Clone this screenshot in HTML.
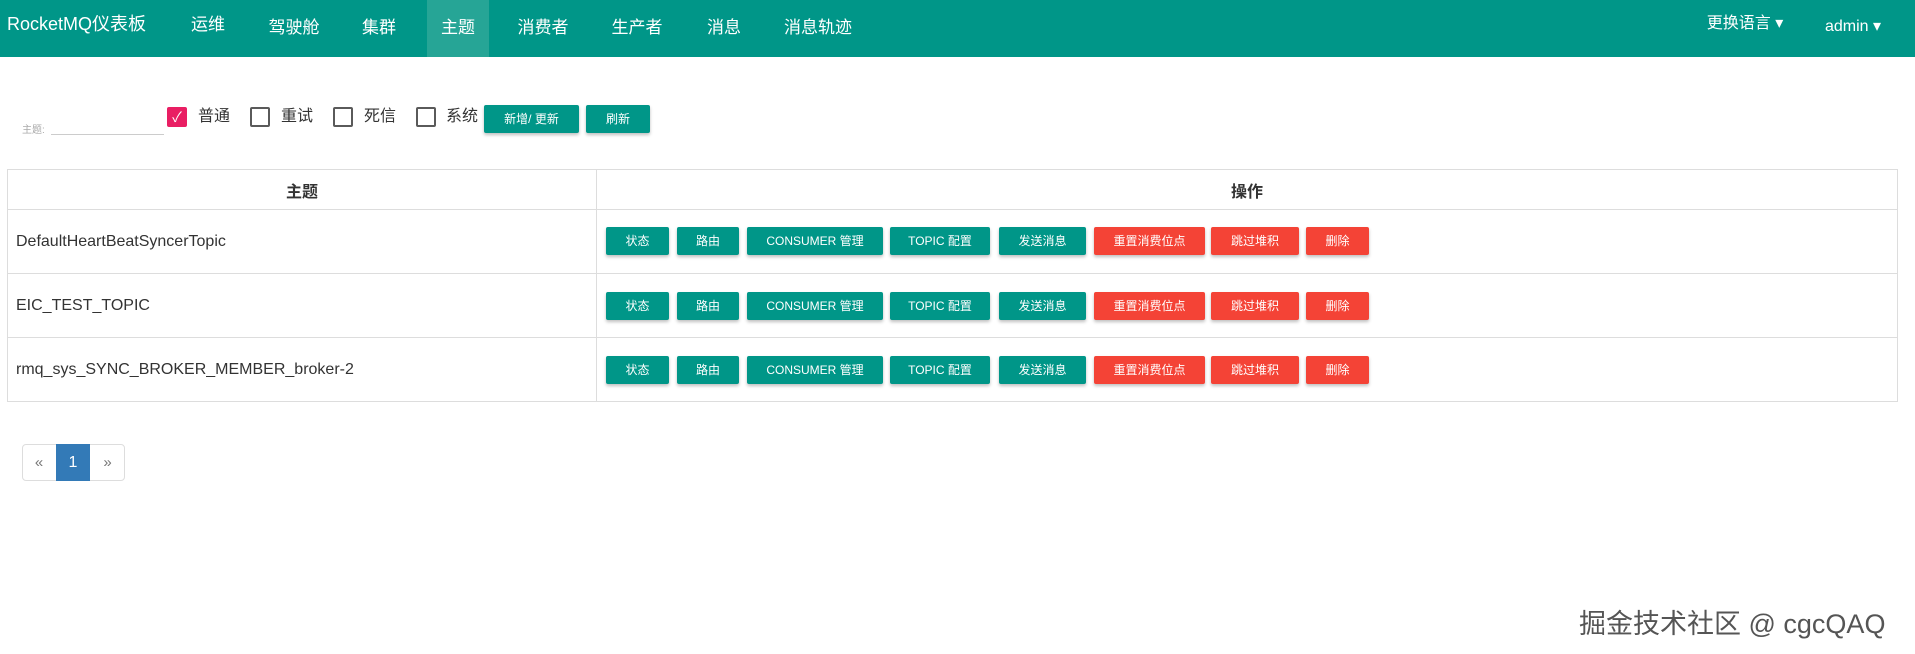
<!DOCTYPE html>
<html><head><meta charset="utf-8">
<style>
*{box-sizing:border-box;margin:0;padding:0}
body{width:1915px;height:654px;background:#fff;font-family:"Liberation Sans","Noto Sans CJK SC",sans-serif;position:relative;overflow:hidden;color:#333}
.nav{position:absolute;left:0;top:0;width:1915px;height:57px;background:#009688;color:#fff}
.nav span{position:absolute;top:0;line-height:52px;font-size:17px;transform:translateX(-50%)}
.act{position:absolute;left:427px;top:0;width:62px;height:57px;background:#26a596}
.abs{position:absolute}
.cb{position:absolute;top:107px;width:20px;height:20px;border:2px solid #5a5a5a;border-radius:2px}
.cbl{position:absolute;top:107px;font-size:16px;line-height:20px;color:#333}
.btn{position:absolute;height:28px;line-height:28px;text-align:center;color:#fff;font-size:12px;border-radius:2px;box-shadow:0 2px 3px rgba(0,0,0,.25)}
.g{background:#009688}.r{background:#f44336}
table{position:absolute;left:7px;top:169px;width:1891px;border-collapse:collapse}
td,th{border:1px solid #ddd;font-size:16px;padding:0 8px}
th{height:40px;font-weight:bold;padding-top:0}
td{height:64px}
</style></head><body>
<div class="nav">
<div class="act"></div>
<span style="transform:none;left:7px;font-size:18px;line-height:48px">RocketMQ仪表板</span>
<span style="left:208px;line-height:50px">运维</span>
<span style="left:294px;line-height:56px">驾驶舱</span>
<span style="left:379px;line-height:56px">集群</span>
<span style="left:458px;line-height:56px">主题</span>
<span style="left:543px;line-height:56px">消费者</span>
<span style="left:637px;line-height:56px">生产者</span>
<span style="left:724px;line-height:56px">消息</span>
<span style="left:818px;line-height:56px">消息轨迹</span>
<span style="left:1745px;line-height:48px;font-size:16px">更换语言 ▾</span>
<span style="left:1853px;line-height:54px;font-size:16px">admin ▾</span>
</div>
<div class="abs" style="left:22px;top:121px;font-size:10px;color:#aaa">主题:</div>
<div class="abs" style="left:51px;top:134px;width:113px;border-top:1px solid #ccc"></div>
<div class="cb" style="left:167px;background:#e91e63;border-color:#e91e63;color:#fff;font-size:14px;line-height:16px;text-align:center">✓</div>
<div class="cbl" style="left:198px">普通</div>
<div class="cb" style="left:250px"></div><div class="cbl" style="left:281px">重试</div>
<div class="cb" style="left:333px"></div><div class="cbl" style="left:364px">死信</div>
<div class="cb" style="left:416px"></div><div class="cbl" style="left:446px">系统</div>
<div class="btn g" style="left:484px;top:105px;width:95px">新增/ 更新</div>
<div class="btn g" style="left:586px;top:105px;width:64px">刷新</div>
<table>
<tr><th style="width:589px">主题</th><th>操作</th></tr>
<tr><td>DefaultHeartBeatSyncerTopic</td><td></td></tr>
<tr><td>EIC_TEST_TOPIC</td><td></td></tr>
<tr><td>rmq_sys_SYNC_BROKER_MEMBER_broker-2</td><td></td></tr>
</table>
<div id="rows"></div>
<script>
var b=[[606,63,'状态','g'],[677,62,'路由','g'],[747,136,'CONSUMER 管理','g'],[890,100,'TOPIC 配置','g'],[999,87,'发送消息','g'],[1094,111,'重置消费位点','r'],[1211,88,'跳过堆积','r'],[1306,63,'删除','r']];
var h='';[227,292,356].forEach(function(y){b.forEach(function(x){h+='<div class="btn '+x[3]+'" style="left:'+x[0]+'px;top:'+y+'px;width:'+x[1]+'px">'+x[2]+'</div>'})});
document.getElementById('rows').innerHTML=h;
</script>
<div class="abs" style="left:22px;top:444px;width:103px;height:37px;border:1px solid #ddd;border-radius:4px"></div>
<div class="abs" style="left:22px;top:444px;width:34px;line-height:37px;text-align:center;color:#777;font-size:15px">«</div>
<div class="abs" style="left:56px;top:444px;width:34px;height:37px;line-height:37px;text-align:center;color:#fff;background:#337ab7;font-size:16px">1</div>
<div class="abs" style="left:90px;top:444px;width:35px;line-height:37px;text-align:center;color:#777;font-size:15px">»</div>
<div class="abs" style="left:1579px;top:602px;font-size:27px;color:#555;white-space:nowrap">掘金技术社区 @ cgcQAQ</div>
</body></html>
